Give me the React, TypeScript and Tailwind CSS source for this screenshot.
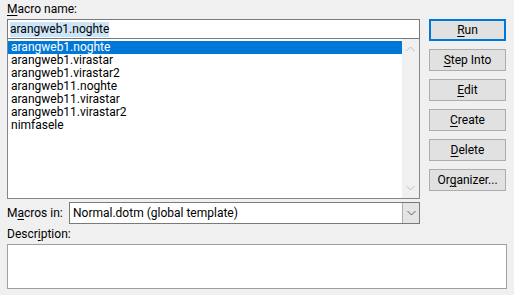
import React from 'react';

const macros = [
  'arangweb1.noghte',
  'arangweb1.virastar',
  'arangweb1.virastar2',
  'arangweb11.noghte',
  'arangweb11.virastar',
  'arangweb11.virastar2',
  'nimfasele',
];

function Btn({ pre, u, post, primary }: { pre?: string; u: string; post?: string; primary?: boolean }) {
  return (
    <button
      className={
        'w-[77px] h-[22px] bg-[#e1e1e1] text-[12px] leading-none text-black flex items-center justify-center ' +
        (primary ? 'border-2 border-[#0078d7]' : 'border border-[#adadad]')
      }
    >
      {pre}
      <span className="underline underline-offset-2">{u}</span>
      {post}
    </button>
  );
}

function Chevron({ up, color }: { up?: boolean; color: string }) {
  return (
    <svg width="9" height="6" viewBox="0 0 9 6">
      <path d={up ? 'M0.5 5 L4.5 1 L8.5 5' : 'M0.5 1 L4.5 5 L8.5 1'} fill="none" stroke={color} strokeWidth="1" />
    </svg>
  );
}

export default function App() {
  return (
    <div
      className="w-[514px] h-[295px] bg-[#f0f0f0] text-black text-[12px] overflow-hidden"
      style={{ fontFamily: 'Roboto, "Noto Sans", sans-serif' }}
    >
      <div className="flex pl-[7px]">
        {/* left column */}
        <div className="w-[413px] flex flex-col">
          <div className="h-[19px] leading-[19px]">
            <span className="underline underline-offset-2">M</span>acro name:
          </div>
          <div className="h-[20px] border border-[#7a7a7a] bg-white flex items-center pl-[2px]">
            <span className="bg-[#cce4f7] leading-[15px]">arangweb1.noghte</span>
          </div>
          <div className="h-[160px] border border-[#828790] border-t-0 bg-white flex">
            <div className="flex-1 pt-[2px]">
              {macros.map((m, i) => (
                <div
                  key={m}
                  className={
                    'h-[13px] leading-[13px] pl-[3px] ' + (i === 0 ? 'bg-[#0078d7] text-white' : '')
                  }
                >
                  {m}
                </div>
              ))}
            </div>
            <div className="w-[17px] bg-[#f0f0f0] flex flex-col items-center justify-between pt-[7px] pb-[7px]">
              <Chevron up color="#c0c0c0" />
              <Chevron color="#c0c0c0" />
            </div>
          </div>
          <div className="flex items-center mt-[3px] h-[22px]">
            <div className="w-[62px]">
              M<span className="underline underline-offset-2">a</span>cros in:
            </div>
            <div className="flex-1 h-[22px] border border-[#7a7a7a] bg-white flex">
              <div className="flex-1 pl-[3px] leading-[20px]">Normal.dotm (global template)</div>
              <div className="w-[17px] bg-[#e5e5e5] border-l border-[#adadad] flex items-center justify-center">
                <Chevron color="#606060" />
              </div>
            </div>
          </div>
        </div>
        {/* right buttons */}
        <div className="ml-[9px] pt-[19px] flex flex-col gap-[8px]">
          <Btn u="R" post="un" primary />
          <Btn u="S" post="tep Into" />
          <Btn u="E" post="dit" />
          <Btn u="C" post="reate" />
          <Btn u="D" post="elete" />
          <Btn pre="Or" u="g" post="anizer..." />
        </div>
      </div>
      <div className="pl-[7px] h-[20px] leading-[20px]">
        Descr<span className="underline underline-offset-2">i</span>ption:
      </div>
      <div className="ml-[7px] w-[500px] h-[45px] border border-[#a0a0a0] bg-white" />
    </div>
  );
}
